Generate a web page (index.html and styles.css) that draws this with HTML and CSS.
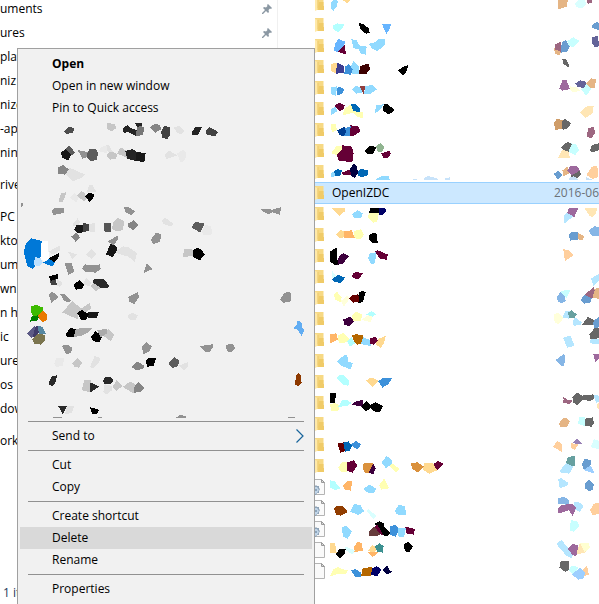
FILE: index.html
```html
<!DOCTYPE html>
<html lang="en">
<head>
<meta charset="utf-8">
<title>File Explorer</title>
<link rel="stylesheet" href="styles.css">
</head>
<body>
<svg class="defs" aria-hidden="true">
  <symbol id="folder" viewBox="0 0 9 16">
    <path d="M0 1h8.500v9h.5v4H1z" fill="#f7d984"/>
    <path d="M4 6h4.500v4h.5v4H3z" fill="#f0cb68"/>
    <path d="M0 2l3 1v8l-1 3-2 1z" fill="#ffe9a8"/>
    <path d="M2.500 3h.8v8l-.8 2z" fill="#e9c25c"/>
  </symbol>
  <symbol id="sheet" viewBox="0 0 10 16">
    <path d="M-6.500.500h13l3 3v12h-16z" fill="#fafafa" stroke="#b4b4b4"/>
    <path d="M6.500.500v3h3z" fill="#ddd" stroke="#999"/>
  </symbol>
  <symbol id="config" viewBox="0 0 10 16">
    <path d="M-6.500.500h13l3 3v12h-16z" fill="#fafafa" stroke="#b4b4b4"/>
    <path d="M6.500.500v3h3z" fill="#ddd" stroke="#999"/>
    <path d="M0 7l1-1 1 1h2v2l1 1-1 2v2H2l-1 2H0z" fill="#8ea3b7"/>
    <path d="M0 8h2l2 3-2 3-2 1z" fill="#c1d5e8"/>
    <circle cx="1" cy="11" r="1" fill="#7b95ad"/>
  </symbol>
  <symbol id="pin" viewBox="0 0 10 10">
    <path d="M6 0l4 4-1 1-1-.500L6.500 6 7 8 6 9 4 7 1 10H0V9l3-3-2-2 1-1 2 .500L5.500 2 5 1z" fill="#8b98a3"/>
  </symbol>
</svg>
<main class="window">
  <nav class="tree" aria-label="Folders">
    <ul>
      <li><a href="#">uments</a><svg class="pin"><use href="#pin"/></svg></li>
      <li><a href="#">ures</a><svg class="pin"><use href="#pin"/></svg></li>
      <li><a href="#">plat</a></li>
      <li><a href="#">niz</a></li>
      <li><a href="#">nizd</a></li>
      <li><a href="#">-ap</a></li>
      <li><a href="#">ning</a></li>
    </ul>
    <ul><li><a href="#">rive</a></li></ul>
    <ul>
      <li><a href="#">PC</a></li>
      <li><a href="#">ktop</a></li>
      <li><a href="#">um</a></li>
      <li><a href="#">wnlo</a></li>
      <li><a href="#">n ha</a></li>
      <li><a href="#">ic</a></li>
      <li><a href="#">ures</a></li>
      <li><a href="#">os</a></li>
      <li><a href="#">dow</a></li>
    </ul>
    <ul><li><a href="#">ork</a></li></ul>
    <p class="status">1 it</p>
  </nav>
  <section class="files">
    <table>
      <tbody>
        <tr><td><svg class="icon"><use href="#folder"/></svg></td><td></td><td></td></tr>
        <tr><td><svg class="icon"><use href="#folder"/></svg></td><td></td><td></td></tr>
        <tr><td><svg class="icon"><use href="#folder"/></svg></td><td></td><td></td></tr>
        <tr><td><svg class="icon"><use href="#folder"/></svg></td><td></td><td></td></tr>
        <tr><td><svg class="icon"><use href="#folder"/></svg></td><td></td><td></td></tr>
        <tr><td><svg class="icon"><use href="#folder"/></svg></td><td></td><td></td></tr>
        <tr><td><svg class="icon"><use href="#folder"/></svg></td><td></td><td></td></tr>
        <tr><td><svg class="icon"><use href="#folder"/></svg></td><td></td><td></td></tr>
        <tr><td><svg class="icon"><use href="#folder"/></svg></td><td></td><td></td></tr>
        <tr class="selected"><td><svg class="icon"><use href="#folder"/></svg></td><td>OpenIZDC</td><td class="date">2016-06</td></tr>
        <tr><td><svg class="icon"><use href="#folder"/></svg></td><td></td><td></td></tr>
        <tr><td><svg class="icon"><use href="#folder"/></svg></td><td></td><td></td></tr>
        <tr><td><svg class="icon"><use href="#folder"/></svg></td><td></td><td></td></tr>
        <tr><td><svg class="icon"><use href="#folder"/></svg></td><td></td><td></td></tr>
        <tr><td><svg class="icon"><use href="#folder"/></svg></td><td></td><td></td></tr>
        <tr><td><svg class="icon"><use href="#folder"/></svg></td><td></td><td></td></tr>
        <tr><td><svg class="icon"><use href="#folder"/></svg></td><td></td><td></td></tr>
        <tr><td><svg class="icon"><use href="#folder"/></svg></td><td></td><td></td></tr>
        <tr><td><svg class="icon"><use href="#folder"/></svg></td><td></td><td></td></tr>
        <tr><td><svg class="icon"><use href="#folder"/></svg></td><td></td><td></td></tr>
        <tr><td><svg class="icon"><use href="#folder"/></svg></td><td></td><td></td></tr>
        <tr><td><svg class="icon"><use href="#folder"/></svg></td><td></td><td></td></tr>
        <tr><td><svg class="icon"><use href="#folder"/></svg></td><td></td><td></td></tr>
        <tr><td><svg class="icon sheet"><use href="#config"/></svg></td><td></td><td></td></tr>
        <tr><td><svg class="icon sheet"><use href="#config"/></svg></td><td></td><td></td></tr>
        <tr><td><svg class="icon sheet"><use href="#config"/></svg></td><td></td><td></td></tr>
        <tr><td><svg class="icon sheet"><use href="#sheet"/></svg></td><td></td><td></td></tr>
        <tr><td><svg class="icon sheet"><use href="#sheet"/></svg></td><td></td><td></td></tr>
      </tbody>
    </table>
    <svg class="mosaic" viewBox="834 0 963 1812" shape-rendering="crispEdges" aria-hidden="true">
      <g transform="translate(930 0)">
        <path fill="#91daff" d="M63 8L72 0 84 2 80 20 70 33 63 27zM124 118L140 120 147 136 170 140 167 164 150 160 147 148 130 144zM176 132L196 126 206 117 224 117 225 135 202 153 186 145zM116 210L130 184 147 200 146 221 128 222zM63 261L82 259 77 287 63 282zM126 270L134 259 153 260 156 279 138 281zM166 257L188 256 201 268 180 282 162 282zM63 328L76 319 82 334 63 346zM197 316L221 313 212 328 196 340zM63 520L75 513 80 529 63 530zM198 537L215 529 236 528 240 540 198 540z"/>
        <path fill="#b3ffff" d="M68 76L82 70 102 73 99 84 85 97 71 90z"/>
        <path fill="#ffd990" d="M98 0H120L111 9zM63 193L77 188 84 195 78 220 64 214z"/>
        <path fill="#000" d="M146 70L157 71 176 84 179 98 168 101 151 88zM264 211L275 203 293 195 292 211 280 227zM221 313L234 313 254 331 237 343 219 333zM165 453L179 437 200 441 190 461 171 461zM179 624H207V630H179z"/>
        <path fill="#67b5ff" d="M216 73L243 73 240 85 229 102zM85 117L107 125 101 137 85 156 71 153 75 132z"/>
        <path fill="#650036" d="M83 155L104 136 108 164zM74 318L86 308 104 315 102 327 88 334zM121 376L144 379 152 393 130 409 117 407zM97 436L126 440 131 460 127 486 87 483 79 463zM214 460L237 452 243 461 232 476 220 473zM95 518L121 508 123 524 99 525z"/>
        <path fill="#3d3d91" d="M81 188L101 197 102 219 78 221z"/>
        <path fill="#3d91da" d="M105 200L116 192 128 207 123 224 103 222zM83 259L104 267 96 282 80 287zM105 384L122 379 119 408 101 409z"/>
        <path fill="#3d0000" d="M150 198L175 191 180 207 170 221 147 221z"/>
        <path fill="#913d3d" d="M148 258L167 257 161 282z"/>
        <path fill="#ffffb3" d="M98 346L103 326 122 314 130 330 147 336 158 335 159 353 142 352 130 338zM63 372L77 371 81 390 65 397zM64 459L80 437 95 437 96 447 78 465z"/>
        <path fill="#0067b5" d="M123 313L138 312 152 327 149 336 130 333zM72 514L83 507 97 511 90 527 76 528zM144 516L154 506 176 512 172 526 157 532 145 527z"/>
        <path fill="#003d91" d="M82 391L103 380 108 394 102 409 89 405z"/>
        <path fill="#91b591" d="M197 438L211 430 222 439 219 454 204 457z"/>
        <path fill="#000040" d="M120 506L132 490 141 501 144 520 134 533 123 528z"/>
        <path fill="#c8e3fa" d="M345 531L355 528 384 536 384 540H342zM404 536L420 532V540H404zM309 537H320V540H309z"/>
        <path fill="#000067" d="M202 624H226V630H208z"/>
      </g>
      <g transform="translate(930 600)">
        <path fill="#ffd990" d="M66 24H104L105 34 88 47zM78 103L91 90 104 93 100 115 89 115zM204 417L228 407 221 432 211 444 197 432zM167 542L183 532 205 542 188 560z"/>
        <path fill="#91daff" d="M126 43L143 30 158 40 153 55 134 55zM174 174L179 160 200 157 194 190 183 193zM156 410L179 420 184 437 163 436 153 431zM80 484L104 465 112 467 115 487 130 488 121 508 95 498z"/>
        <path fill="#000" d="M179 24H208V44H178zM176 108L189 97 201 102 203 128 188 130 177 120zM60 154L81 143 80 176 88 193 76 196 60 185zM146 278L158 272 167 277 159 306 144 309zM60 580L78 580 76 600 60 600z"/>
        <path fill="#000067" d="M208 24H226L228 36 218 44H208z"/>
        <path fill="#ffffb3" d="M177 40L207 40 201 66 188 68 172 52zM133 93L153 88 162 104 151 118 129 114zM71 286L81 275 95 293 92 307 77 300zM127 346L138 335 158 344 152 362 126 362zM83 407L100 399 118 415 110 427 87 430z"/>
        <path fill="#ffb567" d="M103 93L126 91 134 113 101 114zM60 403L79 400 84 419 60 430z"/>
        <path fill="#3d003d" d="M86 170L100 159 117 168 99 191 82 194zM99 359L121 349 132 364 117 378 104 375z"/>
        <path fill="#650036" d="M195 155L202 150 234 164 230 179 210 177zM128 222L136 216 160 219 145 239 127 232zM180 414L196 411 204 421 192 434 179 430z"/>
        <path fill="#0067b5" d="M64 238L85 224 105 233 93 248 74 247z"/>
        <path fill="#daffff" d="M65 211L80 229 65 235z"/>
        <path fill="#fffFda" d="M92 303L112 287 119 297 102 319zM154 359L177 344 190 347 181 367z"/>
        <path fill="#670000" d="M117 297L127 285 145 283 147 306 128 308z"/>
        <path fill="#b3ffff" d="M168 344L185 333 198 343 188 350zM111 425L124 411 135 430 120 440zM79 535L87 525 101 526 118 542 115 557 99 555z"/>
        <path fill="#b56700" d="M126 407L137 402 160 407 153 432 142 434 132 425z"/>
        <path fill="#3d91da" d="M205 544L217 535 247 535 235 552 217 563z"/>
      </g>
      <g transform="translate(600 1200)">
        <path fill="#000" d="M390 0H405V8H390zM484 20L499 2 511 15 527 7 550 18 538 38 520 33 512 24 498 35zM524 372L539 363 553 372 552 380 571 397 564 409 548 406zM408 462L417 448 437 448 433 464 420 476zM611 433L624 426 639 439 627 458 615 453z"/>
        <path fill="#ffffb3" d="M390 14L404 8 419 17 415 33 394 34zM415 203L426 186 441 186 442 215 422 215zM567 183L598 206 588 219 570 200zM537 256L553 235 567 265 544 269zM390 529L399 509 412 501 431 508 444 511 438 522 425 521 412 522z"/>
        <path fill="#b3ffff" d="M415 20L427 0H443L455 10 438 19zM390 241L403 243 422 265 405 270 390 263z"/>
        <path fill="#3d003d" d="M455 13L470 3 490 0 487 20 473 18zM500 217L520 192 528 205 520 222z"/>
        <path fill="#670000" d="M412 131L432 127 438 153 421 158z"/>
        <path fill="#0067b5" d="M430 128L446 124 456 138 449 152 435 155z"/>
        <path fill="#3d91da" d="M453 134L467 122 483 133 474 148 462 142zM453 511L466 507 484 518 484 530 467 532zM570 380L587 374 598 386 588 410 569 405z"/>
        <path fill="#650036" d="M441 187L461 181 472 196 458 218 441 213zM522 382L532 374 550 405 542 403zM699 193L714 183 730 191 711 213zM616 380L645 387 641 404 617 400z"/>
        <path fill="#da913d" d="M488 204L491 190 520 190 505 220 495 219zM633 190L652 187 673 200 655 218 637 207z"/>
        <path fill="#91daff" d="M545 187L560 168 577 181 574 195 557 204zM491 265L509 254 529 266 522 280 499 277zM450 335L461 313 480 314 493 334 475 345zM585 332L596 314 614 318 620 346 590 343zM425 383L437 377 456 394 443 417 429 410zM594 385L618 383 613 409 596 413z"/>
        <path fill="#ffd990" d="M673 188L699 190 711 211 688 221 669 209zM390 429L405 429 410 460 390 459zM505 452L517 434 533 446 523 459z"/>
        <path fill="#ffb567" d="M429 258L443 242 456 243 453 272 435 270zM463 440L474 424 487 432 488 453 463 456zM504 456L535 457 517 472z"/>
        <path fill="#913d00" d="M402 325L411 318 430 319 443 336 423 347 409 345z"/>
        <path fill="#daffff" d="M499 333L505 328 529 347 521 357zM434 439L465 451 457 464 437 450z"/>
        <path fill="#673d3d" d="M507 393L523 379 541 403 529 409 508 409z"/>
        <path fill="#3d9191" d="M525 440L538 429 551 438 549 458 532 456z"/>
        <path fill="#b56700" d="M486 506L517 500 513 527 484 528z"/>
        <path fill="#000067" d="M515 507L530 498 544 509 531 530 514 524z"/>
        <path fill="#000040" d="M546 510L562 497 568 510 578 515 562 523z"/>
      </g>
      <g transform="translate(1620 0)">
        <path fill="#e5b585" d="M54 0H84L80 20 54 29zM41 144L66 154 57 167 46 161zM139 250L154 235 167 237 166 264 150 263zM67 511L83 500 87 520 70 529z"/>
        <path fill="#d9ffff" d="M105 12L116 0H133L140 13 126 24 109 22z"/>
        <path fill="#9d6781" d="M140 0H155V8L144 12zM45 134L64 124 62 155 45 148zM143 385L161 380 165 398 156 415 142 411z"/>
        <path fill="#699dd0" d="M155 76L172 64 177 70V90L157 84zM67 126L77 121 90 138 83 154 64 158 62 142zM40 522L55 512 67 524 54 538z"/>
        <path fill="#c8ffff" d="M82 123L100 112 118 122 101 141 87 138zM123 268L138 250 155 267 138 286zM85 454L94 430 110 434 117 451 105 466z"/>
        <path fill="#646499" d="M155 110L174 109 177 139 165 143 156 129zM106 250L120 241 140 246 133 263 113 262z"/>
        <path fill="#676767" d="M67 178L77 176 88 197 85 201 70 193zM63 360L77 358 94 370 83 385 68 390zM62 443L84 424 95 433 85 456 72 450zM150 453L156 435 177 430V450L158 457zM92 528L120 511 123 524 107 540z"/>
        <path fill="#9d699d" d="M58 266L67 241 79 239 90 267 68 272zM81 513L91 497 112 499 120 511 95 527z"/>
        <path fill="#ffe6b5" d="M121 338L136 320 161 318 157 342 136 353zM54 473L68 448 86 456 90 473 71 474z"/>
        <path fill="#cf9d69" d="M43 368L50 357 68 360 65 388 44 389z"/>
        <path fill="#fffFda" d="M90 259L113 263 120 273 99 277 90 267z"/>
        <path fill="#ffcf9d" d="M139 526L155 500 172 497 175 530 160 537z"/>
        <path fill="#c7e1f7" d="M88 534L101 528 117 540H87zM139 532L160 540H138z"/>
        <path fill="#9d699d" d="M85 627H114V630H87z"/><path fill="#ffe6b5" d="M133 627H168V630H135z"/>
      </g>
      <g transform="translate(1620 600)">
        <path fill="#9d699d" d="M87 24H115L103 51 80 42zM160 462L177 461V477L166 488z"/>
        <path fill="#b5e6ff" d="M73 46L80 38 99 49 77 69 72 67zM153 235L177 222V240L161 258zM67 352L76 334 87 332 95 345 86 356zM99 369L102 349 125 367 122 374 101 378zM69 413L91 407 104 438 81 443zM152 416L177 418V433L150 430zM161 587L175 584 177 605 168 609z"/>
        <path fill="#ffe6b5" d="M133 24H170L169 41 158 51 148 47z"/>
        <path fill="#699dd0" d="M85 105L94 95 115 96 113 119 91 122zM123 301L132 284 156 295 150 308 134 311zM159 364L177 350V382L162 385z"/>
        <path fill="#e5b585" d="M114 98L134 110 126 121 114 118zM160 267L177 264V296L158 294z"/>
        <path fill="#86b6e6" d="M147 92L163 78 177 82V107L156 109zM51 291L61 275 75 290 77 303 63 311 53 303zM46 481L71 462 75 467 73 497 63 497z"/>
        <path fill="#ffcf9d" d="M70 148L84 150 100 166 75 183z"/>
        <path fill="#9d6781" d="M134 284L162 261 164 271 157 296zM65 588L85 600 97 602 89 612 77 608z"/>
        <path fill="#c8ffff" d="M62 275L75 270 92 269 79 294z"/>
        <path fill="#fffFda" d="M42 343L56 338 71 354 56 373 44 367z"/>
        <path fill="#67a0a0" d="M84 338L94 331 110 343 102 355 88 353z"/>
        <path fill="#676767" d="M126 374L143 351 162 360 158 376zM148 404L164 384 177 384V415L152 417zM97 592L111 577 126 587 160 583 164 594 153 602 126 601 113 615 100 608z"/>
      </g>
      <g transform="translate(1620 1200)">
        <path fill="#9d6781" d="M67 0H97V5L83 11 70 8z"/>
        <path fill="#676767" d="M99 0H125L111 16zM135 56L158 52 162 70 155 80 135 78zM58 503L62 484 88 484 88 508 77 516z"/>
        <path fill="#ffe6b5" d="M171 14L177 9V28L172 25zM106 465L120 428 144 441 138 457z"/>
        <path fill="#e5b585" d="M57 73L66 56 81 54 89 65 81 81 61 81z"/>
        <path fill="#c8ffff" d="M114 72L118 52 136 52 134 78zM89 380L93 361 111 363 118 378 103 395 90 393zM86 512L94 498 114 500 110 517 97 523z"/>
        <path fill="#ffcf9d" d="M38 140L53 123 67 134 67 157zM92 130L116 132 104 150 94 144zM150 330L162 311 177 309V342L158 345zM128 511L141 498 147 524 134 528z"/>
        <path fill="#9981b5" d="M98 128L111 116 127 131 113 133z"/>
        <path fill="#d9ffff" d="M152 142L162 117 177 123V147z"/>
        <path fill="#67a0a0" d="M78 189L84 171 104 168 105 199 88 200z"/>
        <path fill="#b5e6ff" d="M60 212L78 189 100 200 88 221 62 218zM55 238L64 234 84 248 83 256 59 265zM98 324L103 306 123 308 130 321 119 336zM49 432L64 420 102 463 94 474 80 468z"/>
        <path fill="#699dd0" d="M126 191L133 178 155 179 151 198 131 210zM134 252L146 239 161 251 160 268 148 273 136 266z"/>
        <path fill="#9dcfff" d="M131 210L151 196 165 221zM96 524L120 502 136 518 130 535 115 539z"/>
        <path fill="#86b6e6" d="M54 311L55 295 70 290 88 300 88 315z"/>
        <path fill="#9d699d" d="M53 325L65 315 98 311 108 324 98 349 87 331 56 341zM84 447L97 431 115 437 109 468 98 466z"/>
        <path fill="#fffFd0" d="M120 428L146 429 150 444 134 456z"/>
      </g>
    </svg>
  </section>
</main>
<div class="menu" role="menu">
  <button class="item default" role="menuitem">Open</button>
  <button class="item" role="menuitem">Open in new window</button>
  <button class="item" role="menuitem">Pin to Quick access</button>
  <svg class="shards" viewBox="60 357 876 897" shape-rendering="crispEdges" aria-hidden="true">
    <g transform="translate(120 330)">
      <path fill="#4d4d4d" d="M73 64L85 50 104 54 99 68 79 72z"/>
      <path fill="#c6c6c6" d="M202 39L226 42 227 56 215 64 201 56zM201 132L213 121 232 133 228 146 212 149 203 142zM231 131L242 112 262 124 263 144zM56 274L63 250 80 246 72 268 66 278zM109 258L123 244 132 246 141 264 134 274z"/>
      <path fill="#242424" d="M247 56L263 44 273 55 291 60 289 78 266 67 251 68zM285 39H307V47L292 54zM256 123L278 117 291 126 288 153 262 146z"/>
      <path fill="#777" d="M293 51L304 48 313 54 309 74 290 80 287 70z"/>
      <path fill="#181818" d="M62 128L83 114 98 128 85 151 67 143zM290 126L317 129 313 157 286 152z"/>
      <path fill="#5c5c5c" d="M76 118L87 106 105 127 95 136zM138 131L150 116 168 116 174 130 171 148 153 155 139 142z"/>
      <path fill="#929292" d="M113 120L143 126 139 143 127 146zM36 302L41 295 71 293 71 309 41 315zM252 290L272 299 285 306 276 314 257 309z"/>
      <path fill="#e2e2e2" d="M194 110L205 103 219 126 206 127zM74 191L88 173 134 193 126 203 99 214zM141 247L147 225 158 225 169 246 154 247z"/>
      <path fill="#e9e9e9" d="M176 123L184 110 202 108 202 131zM91 263L104 248 117 263 108 278z"/>
      <path fill="#868686" d="M54 172L70 165 86 178 76 194 55 192z"/>
      <path d="M136 260L146 249 164 252 158 267 149 276z"/>
    </g>
    <g transform="translate(0 600)">
      <path fill="#e2e2e2" d="M217 75L233 54 240 67 232 82zM266 71L284 70 284 96 264 94zM147 154L179 137 180 151 164 162 150 160zM203 155L231 163 218 178zM258 163L274 148 288 162 275 178zM341 157L370 139 388 143 411 160 404 185 385 170zM170 236L188 249 179 262 170 255zM248 254L258 233 273 248 268 258zM382 348L396 338 414 347 406 360 390 359zM270 501L284 468 302 474 297 489 280 506zM310 575L314 552 335 558 335 572 319 583zM195 643L201 617 222 618 216 639z"/>
      <path fill="#181818" d="M223 89L229 74 249 74 248 97 233 100zM265 336L296 337 291 355 264 354z"/>
      <path fill="#424242" d="M250 70L266 71 267 92 248 98zM149 242L167 235 171 255 153 254z"/>
      <path fill="#555" d="M311 69L334 69 333 97 312 94z"/>
      <path fill="#c6c6c6" d="M339 68L353 53 374 65 368 90 352 94 336 87zM271 258L286 243 306 261 288 273zM186 337L217 304 244 325 270 308 273 325 254 340 236 333 233 358zM308 406L326 388 342 404 333 424zM217 490L233 474 248 488 236 503 223 500zM246 569L253 539 272 541 270 575 252 574zM338 561L349 541 367 559 348 573zM368 561L389 545 406 552 402 581z"/>
      <path fill="#858585" d="M382 72L401 61 416 76 401 91 386 82zM214 109L230 98 240 113 227 126zM393 501L412 485 431 496 434 504 410 511zM404 558L414 546 432 563 426 574 401 579z"/>
      <path fill="#929292" d="M156 36L160 27 192 23 190 37 161 44zM372 20L386 22 406 34 394 46 378 38zM452 119L468 98 484 103 480 125 460 133zM323 124L353 107 354 118 341 136zM194 190L214 188 223 215 205 224zM246 205L255 193 278 196 300 193 302 207 288 218 257 215zM431 219L440 189 459 207zM146 285L156 274 176 290 155 309zM181 283L193 283 212 302 208 308 192 303zM385 291L415 276 416 292 403 312 388 306zM425 440L439 426 456 440 446 456 430 462zM186 437L203 434 218 444 213 459 198 462z"/>
      <path d="M147 174L179 158 175 174 163 187 149 180zM146 229L173 222 174 235 153 243zM220 255L238 240 252 254 247 266 228 269zM231 339L245 330 267 343 258 360 244 360zM198 401L210 385 229 386 226 412 201 412zM273 411L287 393 307 410 298 426 280 424zM437 483L445 474 468 475 461 498 442 500zM270 622L297 629 291 641 276 641z"/>
      <path fill="#151515" d="M318 163L331 131 349 138 351 151 338 171z"/>
      <path fill="#292929" d="M278 248L282 236 313 238 330 262 303 264zM147 544L157 528 170 526 169 543 157 560 148 554zM309 541L318 530 336 533 340 543 330 553 313 552zM270 547L298 560 271 577zM174 617L201 617 188 643z"/>
      <path fill="#aaa" d="M222 410L227 388 241 384 278 383 264 397 242 409zM291 390L320 387 322 400 302 412z"/>
      <path fill="#e9e9e9" d="M162 491L170 474 192 474 189 497 170 501z"/>
      <path fill="#0078d7" d="M71 157L78 131 95 115 126 123 124 143 123 172 99 207 83 200zM129 188L148 177 165 188 157 200z"/>
      <path fill="#fff" d="M125 123L143 122 147 177 133 184 121 178z"/>
      <path fill="#bde1ff" d="M101 194L105 171 122 175 129 189 116 199z"/>
      <path fill="#3dbb00" d="M93 320L107 314 128 322 130 337 112 348 95 346z"/>
      <path fill="#008000" d="M93 350L118 345 113 361 91 365z"/>
      <path fill="#e97900" d="M113 348L129 330 142 345 139 362 127 367z"/>
      <path fill="#5d5b86" d="M81 401L105 378 107 410 94 413z"/><path fill="#403c6a" d="M107 378H114L119 389 110 412 98 410z"/>
      <path fill="#5687a1" d="M115 378L127 380 138 402 116 404z"/><path fill="#7b754f" d="M97 418L114 402 135 404 136 420 124 434 103 432z"/>
      <path fill="#929292" d="M64 10H69V14L65 28zM160 651H185V654H160zM294 651H307V654H294z"/>
    </g>
    <g transform="translate(480 330)">
      <path fill="#858585" d="M-30 52L-15 40 0 46 4 58-14 68z"/>
      <path fill="#424242" d="M3 65L12 48 30 51 30 76 22 87 7 84zM136 66L147 51 175 66 166 78 142 75z"/>
      <path fill="#e2e2e2" d="M41 52L57 48 73 61 66 73 51 69zM15 135L27 121 52 137 18 147zM6 332L16 323 41 342 34 350 9 342zM58 766L83 757 85 768 72 783z"/>
      <path fill="#242424" d="M95 67L105 52 126 52 114 76 97 75z"/>
      <path fill="#e9e9e9" d="M50 131L69 120 78 127 76 149 63 158zM126 365L135 344 154 349 156 373 130 376z"/>
      <path fill="#5c5c5c" d="M96 349L107 335 133 341 121 368 97 354zM27 757L43 742 59 752 54 768 39 774 29 767z"/>
      <path fill="#929292" d="M303 296L338 299 364 291 359 314 337 307 327 313 306 303zM360 569L372 551 387 544 394 553 394 574 369 579zM121 709L133 706 158 703 159 713 147 727 136 726zM197 705L217 700 226 714 211 728 201 723zM49 922L62 914 77 919 77 923H49zM384 921H405V924H384z"/>
      <path fill="#c6c6c6" d="M68 440L73 416 102 419 101 439z"/>
      <path d="M100 420L112 413 124 419 134 433 120 451 99 441z"/>
      <path fill="#62adf2" d="M401 655L410 646 411 633 424 635 426 651 433 661 425 679 414 660z"/>
      <path fill="#8e3900" d="M408 797L415 789 422 797 425 818 418 827 405 826z"/>
    </g>
  </svg>
  <hr>
  <button class="item" role="menuitem">Send to<svg class="chevron" viewBox="0 0 8 14"><path d="M.5.500L7 7 .500 13.500" fill="none" stroke="#17649b" stroke-width="1.200"/></svg></button>
  <hr>
  <button class="item" role="menuitem">Cut</button>
  <button class="item" role="menuitem">Copy</button>
  <hr>
  <button class="item" role="menuitem">Create shortcut</button>
  <button class="item hovered" role="menuitem">Delete</button>
  <button class="item" role="menuitem">Rename</button>
  <hr>
  <button class="item" role="menuitem">Properties</button>
</div>
</body>
</html>
```
FILE: styles.css
```css
* { box-sizing: border-box; }

body {
  margin: 0;
  min-height: 100vh;
  overflow: hidden;
  position: relative;
  background: #fff;
  color: #000;
  font: 12px/16px "Open Sans", "Noto Sans", sans-serif;
}

.defs { position: absolute; width: 0; height: 0; }

.window {
  display: grid;
  grid-template-columns: 278px 1fr;
  height: 100vh;
  overflow: hidden;
}

.tree {
  display: flex;
  flex-direction: column;
  gap: 8px;
  margin-top: -3px;
  border-right: 1px solid #f0f0f0;
}

.tree ul { margin: 0; padding: 0; list-style: none; }

.tree li {
  display: flex;
  align-items: center;
  justify-content: space-between;
  height: 24px;
  padding-right: 5px;
}

.tree a { color: #000; text-decoration: none; white-space: nowrap; }

.pin { width: 10px; height: 10px; }

.status { margin: auto 0 3px; padding-left: 3px; color: #1e395b; }

.files { position: relative; overflow: hidden; }

table {
  width: 100%;
  margin-top: -7px;
  border-spacing: 0;
  table-layout: fixed;
}

tr { height: 21px; }

td { padding: 0; white-space: nowrap; }
td:first-child { width: 54px; padding-left: 37px; }
td:last-child { width: 45px; }

.date { color: #6d7278; }

.selected {
  background: #cce8ff;
  box-shadow: inset 0 1px #99d1ff, 0 1px #99d1ff;
}

.icon { display: block; width: 9px; height: 16px; }
.icon.sheet { width: 10px; }

.mosaic {
  position: absolute;
  top: 0;
  left: 0;
  width: 321px;
  height: 604px;
}

.menu {
  position: absolute;
  top: 48px;
  bottom: 0;
  left: 17px;
  width: 298px;
  overflow: hidden;
  padding: 4px 2px 0;
  border: 1px solid #a0a0a0;
  border-bottom: 0;
  background: #f1f1f1;
}

.item {
  display: flex;
  align-items: center;
  justify-content: space-between;
  width: 100%;
  height: 22px;
  padding: 0 8px 0 32px;
  border: 0;
  background: none;
  color: #000;
  font: inherit;
  text-align: left;
}

.default { font-weight: 700; }
.hovered { background: #d9d9d9; }

.menu hr {
  height: 1px;
  margin: 3px 8px;
  border: 0;
  background: #919191;
}

.shards { display: block; width: 292px; height: 299px; }
.chevron { width: 8px; height: 14px; }
```
